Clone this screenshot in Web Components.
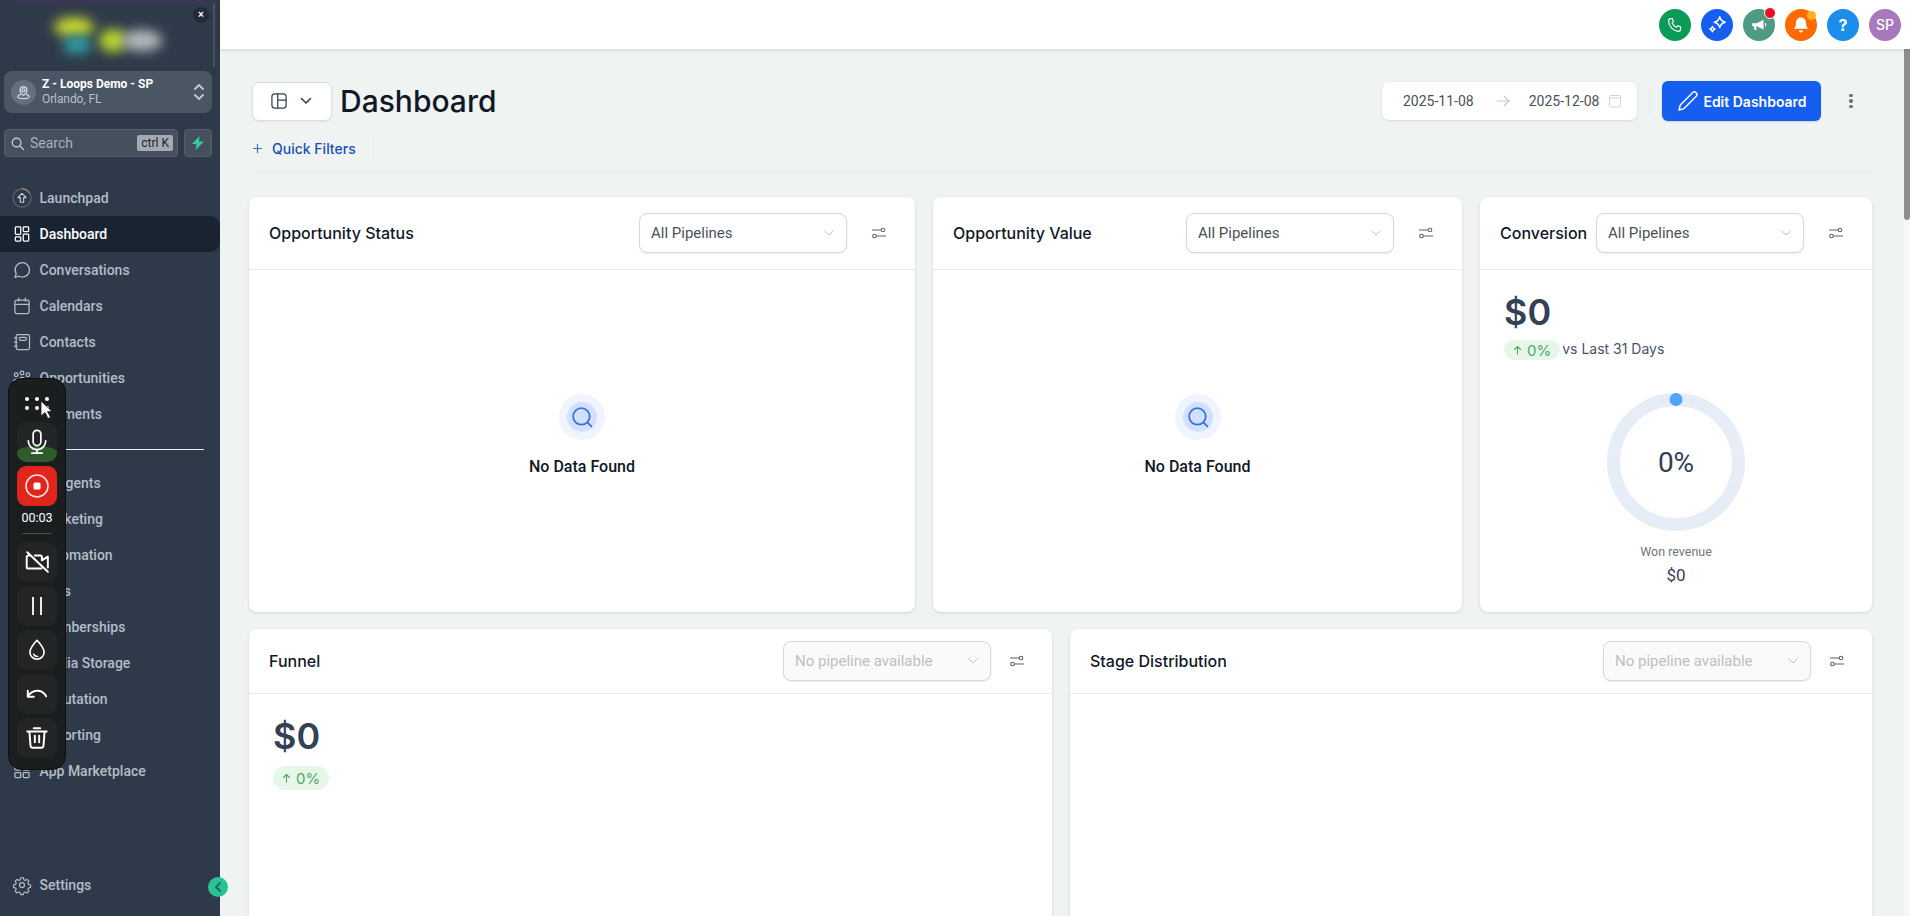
<!DOCTYPE html>
<html lang="en"><head><meta charset="utf-8"><title>Dashboard</title>
<style>
html,body{margin:0;height:100%;overflow:hidden;background:#eff4f3;font-family:Inter,"Liberation Sans",sans-serif}
</style></head><body>
<app-shell></app-shell>
<script>
const S='fill="none" stroke="currentColor" stroke-width="1.5" stroke-linecap="round" stroke-linejoin="round"';
const ic=(d,size=20,vb=24,sw=1.5)=>`<svg width="${size}" height="${size}" viewBox="0 0 ${vb} ${vb}" ${S.replace('1.5',sw)}>${d}</svg>`;
const ICONS={
 launch:`<svg width="20" height="20" viewBox="0 0 24 24" fill="none" stroke-width="1.3" stroke-linecap="round" stroke-linejoin="round"><circle cx="12" cy="12" r="11" stroke="#5f6b7a"/><path d="M12 1a11 11 0 0 1 9 4.800" stroke="#c98a5a"/><path d="M12 6.500 7 11.500h3V17h4v-5.500h3z" stroke="#cbd2da"/></svg>`,
 dash:ic('<rect x="4" y="3.500" width="6.500" height="9" rx="1"/><rect x="13.500" y="3.500" width="6.500" height="5.500" rx="1"/><rect x="4" y="15.500" width="6.500" height="5" rx="1"/><rect x="13.500" y="12" width="6.500" height="8.500" rx="1"/>'),
 chat:ic('<path d="M3.500 21l1.600-4.500A8.600 8.600 0 1 1 8 19.300z"/>'),
 cal:ic('<rect x="3.500" y="5" width="17" height="16" rx="2"/><path d="M3.500 10h17M8 2.500V6M16 2.500V6"/>'),
 contacts:ic('<rect x="5" y="3" width="16" height="18" rx="2"/><rect x="9" y="6.500" width="8" height="3.500" rx="1"/><path d="M3 7h3M3 12h3M3 17h3"/>'),
 opp:ic('<circle cx="5" cy="8" r="2.200"/><circle cx="12" cy="6" r="2.200"/><circle cx="19" cy="8" r="2.200"/><path d="M2 16c0-3 6-3 6 0M9 14c0-3.500 6-3.500 6 0M16 16c0-3 6-3 6 0"/>'),
 pay:ic('<rect x="3" y="5" width="18" height="14" rx="2"/><path d="M3 10h18"/>'),
 bot:ic('<rect x="4" y="7" width="16" height="13" rx="3"/><path d="M12 3v4"/>'),
 mkt:ic('<path d="M4 10v4l12 5V5z"/>'),
 auto:ic('<circle cx="12" cy="12" r="8"/>'),
 sites:ic('<circle cx="12" cy="12" r="9"/><path d="M3 12h18"/>'),
 mem:ic('<circle cx="12" cy="8" r="4"/><path d="M5 20c1-6 13-6 14 0"/>'),
 media:ic('<rect x="3" y="5" width="18" height="14" rx="2"/>'),
 rep:ic('<path d="M12 4l2.500 5 5.500.8-4 3.900 1 5.500-5-2.600-5 2.600 1-5.500-4-3.900 5.500-.8z"/>'),
 rpt:ic('<path d="M5 20V10M12 20V4M19 20v-7"/>'),
 apps:ic('<rect x="3.500" y="4" width="7" height="7" rx="1"/><rect x="13.500" y="4" width="7" height="7" rx="1"/><rect x="3.500" y="14" width="7" height="6" rx="1"/><rect x="13.500" y="14" width="7" height="6" rx="1"/>'),
 gear:ic('<circle cx="12" cy="12" r="3"/><path d="M10.300 2.500h3.400l.7 2.700 1.800.8 2.400-1.400 2.400 2.400-1.400 2.400.8 1.800 2.700.7v3.200l-2.700.7-.8 1.800 1.400 2.400-2.400 2.400-2.400-1.400-1.800.8-.7 2.700h-3.400l-.7-2.700-1.800-.8-2.400 1.400-2.400-2.400 1.400-2.400-.8-1.800-2.700-.7v-3.200l2.700-.7.8-1.800-1.400-2.400 2.400-2.400 2.400 1.400 1.800-.8z" transform="translate(1 1) scale(.92)"/>',22)
};
function def(name,css,html){
 customElements.define(name,class extends HTMLElement{
  connectedCallback(){ if(this.shadowRoot)return;
   const r=this.attachShadow({mode:'open'});
   const h=typeof html==='function'?html(this):html;
   r.innerHTML=`<style>${css}</style>${h}`;
  }
 });
}
def('nav-item',`:host{display:block;height:36px;color:#b4bcc6;font:500 14px/36px Roboto,sans-serif}
 .r{display:flex;align-items:center;height:36px;padding-left:12px;gap:7.500px;box-sizing:border-box;border-radius:0 10px 10px 0}
 .i{width:20px;height:20px;display:flex;align-items:center;justify-content:center;flex:none}
 :host([active]) .r{background:#1a2332;color:#fff}
 :host([active]){color:#fff}`,
 h=>`<div class="r"><span class="i">${ICONS[h.getAttribute('icon')]}</span><span>${h.getAttribute('label')}</span></div>`);

def('side-bar',`:host{display:flex;flex-direction:column;width:220px;flex:none;height:916px;background:#2e3a49;position:relative;font-family:Roboto,sans-serif;color:#fff}
 .logo{height:71px;position:relative;overflow:hidden;flex:none}
 .logo .band{position:absolute;left:16px;right:4px;top:0;height:67px;background:linear-gradient(#3a3553 0,#2f3b4a 8px)}
 .logo .edge{position:absolute;right:5px;top:3px;width:2px;height:64px;background:#46525f}
 .blob{position:absolute;border-radius:50%;filter:blur(6px)}
 .x{position:absolute;left:193px;top:7px;width:16px;height:16px;border-radius:50%;background:#202c38;color:#fff;font:700 10px/16px "Liberation Sans",sans-serif;text-align:center}
 .loc{margin:0 8px 0 4px;height:42px;flex:none;border-radius:8px;background:#4a5664;display:flex;align-items:center;padding:0 7px;box-sizing:border-box;gap:6px}
 .pin{width:25px;height:25px;border-radius:50%;background:#647080;display:flex;align-items:center;justify-content:center;color:#dfe3e8}
 .lt{flex:1;font:700 12px/15px Roboto,sans-serif;color:#fff}.lt small{display:block;font:400 12px/15px Roboto,sans-serif;color:#b9c0c9;letter-spacing:-.1px}
 .sr{display:flex;gap:6px;margin:16px 8px 0 4px;height:28px;flex:none}
 .search{flex:1;background:#454f5d;border:1px solid #56606d;border-radius:4px;display:flex;align-items:center;padding:0 4px 0 5px;gap:5px;color:#a9b1bb;font-size:14px;box-sizing:border-box}
 .search span{flex:1}.search kbd{background:#a4aab1;color:#1c2430;font:400 12px/16px Roboto,sans-serif;border-radius:2px;padding:0 4px}
 .bolt{width:28px;background:#454f5d;border:1px solid #56606d;border-radius:4px;box-sizing:border-box;display:flex;align-items:center;justify-content:center}
 nav{margin-top:23px;flex:none}
 hr{border:0;height:1px;background:#e8ecef;margin:17px 16px 15px 16px}
 .sp{flex:1}
 .tog{position:absolute;left:208px;top:877px;width:20px;height:20px;border-radius:50%;background:#29c295;display:flex;align-items:center;justify-content:center;color:#1f6a55;z-index:3}
 .set{margin-bottom:13px}`,
 `<div class="logo"><div class="band"></div><div class="edge"></div>
 <div class="blob" style="left:54px;top:17px;width:40px;height:20px;background:#c8d62f"></div>
 <div class="blob" style="left:63px;top:36px;width:28px;height:18px;background:#2d9fa8"></div>
 <div class="blob" style="left:99px;top:29px;width:28px;height:23px;background:#b8d632"></div>
 <div class="blob" style="left:122px;top:30px;width:40px;height:21px;background:#b4babd"></div>
 <div class="x">×</div></div>
 <div class="loc"><span class="pin"><svg width="15" height="15" viewBox="0 0 24 24" fill="none" stroke="currentColor" stroke-width="1.800" stroke-linecap="round" stroke-linejoin="round"><circle cx="12" cy="8.500" r="2.500"/><path d="M12 17c-3-2.500-5.500-5-5.500-8.500a5.500 5.500 0 0 1 11 0C17.500 12 15 14.500 12 17z"/><path d="M7 15c-2.500.8-4 2-4 3.500C3 20.500 7 22 12 22s9-1.500 9-3.500c0-1.500-1.500-2.700-4-3.500"/></svg></span>
 <div class="lt">Z - Loops Demo - SP<small>Orlando, FL</small></div>
 <svg width="12" height="22" viewBox="0 0 12 22" fill="none" stroke="#c4cad1" stroke-width="1.800" stroke-linecap="round" stroke-linejoin="round"><path d="M2 8l4-4 4 4M2 14l4 4 4-4"/></svg></div>
 <div class="sr"><div class="search"><svg width="15" height="15" viewBox="0 0 24 24" fill="none" stroke="#c0c6ce" stroke-width="2.200" stroke-linecap="round"><circle cx="10.500" cy="10.500" r="7"/><path d="M16 16l5.500 5.500"/></svg><span>Search</span><kbd>ctrl K</kbd></div>
 <div class="bolt"><svg width="12" height="14" viewBox="0 0 12 14"><path d="M7.500 0 0 8h4.500L3.500 14 12 5.500H7z" fill="#36c99a"/></svg></div></div>
 <nav>
 <nav-item icon="launch" label="Launchpad"></nav-item><nav-item icon="dash" label="Dashboard" active></nav-item>
 <nav-item icon="chat" label="Conversations"></nav-item><nav-item icon="cal" label="Calendars"></nav-item>
 <nav-item icon="contacts" label="Contacts"></nav-item><nav-item icon="opp" label="Opportunities"></nav-item>
 <nav-item icon="pay" label="Payments"></nav-item><hr>
 <nav-item icon="bot" label="AI Agents"></nav-item><nav-item icon="mkt" label="Marketing"></nav-item>
 <nav-item icon="auto" label="Automation"></nav-item><nav-item icon="sites" label="Sites"></nav-item>
 <nav-item icon="mem" label="Memberships"></nav-item><nav-item icon="media" label="Media Storage"></nav-item>
 <nav-item icon="rep" label="Reputation"></nav-item><nav-item icon="rpt" label="Reporting"></nav-item>
 <nav-item icon="apps" label="App Marketplace"></nav-item></nav>
 <div class="sp"></div><nav-item class="set" icon="gear" label="Settings"></nav-item>
 <div class="tog"><svg width="10" height="12" viewBox="0 0 10 12" fill="none" stroke="currentColor" stroke-width="1.800" stroke-linecap="round" stroke-linejoin="round"><path d="M7 2 3 6l4 4"/></svg></div>`);

def('rec-toolbar',`:host{position:absolute;left:8px;top:378px;width:58px;height:392px;box-sizing:border-box;background:#1b1e1f;border:1px solid #0b0d0e;border-radius:14px;z-index:5;display:flex;flex-direction:column;align-items:center;padding-top:18px;color:#fff}
 .grip{display:grid;grid-template-columns:repeat(3,4px);gap:5px 6px;height:13px;margin-bottom:12px}.grip i{width:4px;height:4px;border-radius:50%;background:#fff}
 .b{width:40px;height:40px;border-radius:9px;background:#222425;display:flex;align-items:center;justify-content:center;margin-bottom:4px;position:relative;overflow:hidden;flex:none}
 .b svg{position:relative}
 .mic::before{content:"";position:absolute;left:0;right:0;bottom:0;height:16px;background:#2f5c2d;border-radius:50% 50% 9px 9px/40% 40% 9px 9px}
 .rec{background:#e0261c;margin-bottom:4px}
 .t{font:400 12.500px/16px Roboto,sans-serif;margin-bottom:7px}
 .d{width:30px;height:1px;background:#4a4d4f;margin-bottom:8px}
 .cur{position:absolute;left:31px;top:21px}`,
 `<div class="grip"><i></i><i></i><i></i><i></i><i></i><i></i></div>
 <svg class="cur" width="13" height="20" viewBox="0 0 13 20"><path d="M1 1v15l4-3.500 3 6 2.500-1.200-3-5.800H12z" fill="#fff" stroke="#222" stroke-width=".8"/></svg>
 <div class="b mic">${ic('<rect x="8.700" y="2" width="6.600" height="13" rx="3.300"/><path d="M4.500 11a7.500 7.500 0 0 0 15 0M12 18.500v3M7.500 21.500h9"/>',28)}</div>
 <div class="b rec"><svg width="26" height="26" viewBox="0 0 26 26"><circle cx="13" cy="13" r="11" fill="none" stroke="#fbe3e1" stroke-width="1.600"/><rect x="9.500" y="9.500" width="7" height="7" rx="1.500" fill="#fff"/></svg></div>
 <div class="t">00:03</div><div class="d"></div>
 <div class="b">${ic('<path d="M3 3l19 18M6 6H4a1.500 1.500 0 0 0-1.500 1.500v9A1.500 1.500 0 0 0 4 18h12M10 6h5a1.500 1.500 0 0 1 1.500 1.500v3L22 7v10"/>',26,24,1.8)}</div>
 <div class="b"><svg width="26" height="26" viewBox="0 0 26 26" stroke="#fff" stroke-width="1.800"><path d="M9 4v18M17 4v18"/></svg></div>
 <div class="b">${ic('<path d="M12 3c3 3.500 6.500 6.800 6.500 11a6.500 6.500 0 0 1-13 0C5.500 9.800 9 6.500 12 3z"/><path d="M9 16c.7 1.300 2 2 3.500 2"/>',26)}</div>
 <div class="b">${ic('<path d="M3.500 9v5.500H9"/><path d="M3.500 14C6 10.500 9 9 12.500 9c3.500 0 6 1.800 8 5"/>',26,24,1.8)}</div>
 <div class="b">${ic('<path d="M3 6h18M9 3h6M5 6l1 13a2 2 0 0 0 2 2h8a2 2 0 0 0 2-2l1-13M10 10v6M14 10v6"/>',26,24,1.8)}</div>`);

def('top-bar',`:host{display:flex;justify-content:flex-end;align-items:center;gap:10px;height:49px;flex:none;background:#fff;padding-right:9px;box-sizing:border-box;box-shadow:0 1px 4px rgba(16,24,40,.14);position:relative;z-index:2}
 .c{width:32px;height:32px;border-radius:50%;display:flex;align-items:center;justify-content:center;color:#fff;position:relative;font:500 14px Inter,sans-serif}
 .n{position:absolute;top:-1px;right:-1px;width:9px;height:9px;border-radius:50%;border:1px solid #fff}`,
 `<div class="c" style="background:#0b9a58">${ic('<path d="M6 3.500h2.500l1.500 4-2 1.500a11 11 0 0 0 6 6l1.500-2 4 1.500V17c0 2-1.500 3.500-3 3.500C10 20.500 3.500 13.500 3.500 7 3.500 5 5 3.500 6 3.500z"/>',18)}</div>
 <div class="c" style="background:#155eef">${ic('<path d="M15 3c.8 3.800 2.200 5.200 6 6-3.800.8-5.200 2.200-6 6-.8-3.800-2.200-5.200-6-6 3.800-.8 5.200-2.200 6-6zM7 13.500c.4 2 1 2.600 3 3-2 .4-2.600 1-3 3-.4-2-1-2.600-3-3 2-.4 2.600-1 3-3z"/>',22)}</div>
 <div class="c" style="background:#4e9a82"><svg width="18" height="18" viewBox="0 0 24 24" fill="#fff"><path d="M3 9.500h6L18 5v13l-9-4.500H8l1 5H6l-1-5H3zM20 8.500a3.500 3.500 0 0 1 0 6z"/></svg><span class="n" style="background:#e9111f;width:10px;height:10px;top:-2px;right:-1px"></span></div>
 <div class="c" style="background:#ff6a00"><svg width="20" height="20" viewBox="0 0 24 24" fill="#fff"><path d="M12 3a6 6 0 0 0-6 6c0 4-1 6-2.500 7.500h17C19 15 18 13 18 9a6 6 0 0 0-6-6zM9.500 18.500h5a2.500 2.500 0 0 1-5 0z"/></svg><span class="n" style="background:#fdb022;border:0;top:2px;right:1px"></span></div>
 <div class="c" style="background:#1b8eea;font:700 16px Inter,sans-serif">?</div>
 <div class="c" style="background:#a678be">SP</div>`);

def('dash-header',`:host{display:block;color:#101828}
 .a{display:flex;align-items:center;height:40px;padding-left:3px}
 .tg{width:80px;height:39px;box-sizing:border-box;background:#fff;border:1px solid #d9dde3;border-radius:7px;display:flex;align-items:center;justify-content:center;gap:11px;margin-right:8px;color:#344054;box-shadow:0 1px 2px rgba(16,24,40,.05)}
 .tg svg:first-child{margin-left:-3px}
 h1{margin:0;font:500 30px/40px Inter,sans-serif;color:#101828}
 .sp{flex:1}
 .dp{width:255px;height:38px;background:#fff;border-radius:7px;box-shadow:0 1px 3px rgba(16,24,40,.12);display:flex;align-items:center;font:400 14px Roboto,sans-serif;color:#4a5058;box-sizing:border-box;padding-left:21px}
 .dp .ar{margin:0 19px 0 22px;color:#c4c7cb;display:flex}.dp .cal{margin-left:9px;color:#d0d3d7;display:flex}
 .sep{width:1px;height:26px;background:#e6eaea;margin:0 12px}
 .ed{width:159px;height:40px;background:#155eef;color:#fff;border-radius:6px;display:flex;align-items:center;justify-content:center;gap:3px;font:600 14px Inter,sans-serif;box-sizing:border-box;box-shadow:0 1px 2px rgba(16,24,40,.15)}
 .dots{width:4px;margin:0 19px 0 28px;display:flex;flex-direction:column;gap:2px}.dots i{width:3.500px;height:3.500px;border-radius:50%;background:#6b7178}
 .q{display:flex;align-items:center;height:25px;margin-top:15px;padding-left:3px;color:#1d50b2;font:500 14px Inter,sans-serif;gap:9px}
 .q svg{flex:none}.q i{width:1px;height:25px;background:#eaeeee;margin-left:3px}
 .ln{height:1px;background:#e6ebeb;margin-top:10px}`,
 `<div class="a"><div class="tg">${ic('<rect x="3.500" y="3.500" width="17" height="17" rx="3.500"/><path d="M10.500 3.500v17M10.500 11h10"/>',20)}<svg width="12" height="8" viewBox="0 0 12 8" fill="none" stroke="#344054" stroke-width="1.600" stroke-linecap="round" stroke-linejoin="round"><path d="M1.500 1.500 6 6l4.500-4.500"/></svg></div><h1>Dashboard</h1><div class="sp"></div>
 <div class="dp"><span>2025-11-08</span><span class="ar"><svg width="14" height="14" viewBox="0 0 14 14" fill="none" stroke="currentColor" stroke-width="1.100"><path d="M1 7h12M8 2l5 5-5 5"/></svg></span><span>2025-12-08</span><span class="cal"><svg width="14" height="14" viewBox="0 0 14 14" fill="none" stroke="currentColor" stroke-width="1"><rect x="1.500" y="1.500" width="11" height="11.500" rx="1"/><path d="M1.500 4h11"/></svg></span></div>
 <div class="sep"></div>
 <div class="ed"><svg width="24" height="24" viewBox="0 0 24 24" fill="none" stroke="#fff" stroke-width="1.400" stroke-linejoin="round"><path d="M3 21l1.300-5L16.500 3.800a2.500 2.500 0 0 1 3.700 3.500L8 19.600z"/></svg>Edit Dashboard</div>
 <div class="dots"><i></i><i></i><i></i></div></div>
 <div class="q"><svg width="11" height="11" viewBox="0 0 11 11" stroke="#3b6fd0" stroke-width="1.200"><path d="M5.500 1v9M1 5.500h9"/></svg><span>Quick Filters</span><i></i></div>
 <div class="ln"></div>`);

def('pipe-select',`:host{display:flex;align-items:center;width:208px;height:40px;box-sizing:border-box;border:1px solid #d5d8dc;border-radius:8px;background:#fff;padding:0 11px;font:400 15px Roboto,sans-serif;color:#4a5058;box-shadow:0 1px 2px rgba(16,24,40,.08)}
 :host([off]){background:#f9fafa;color:#bcc0c4}
 span{flex:1}`,h=>`<span>${h.getAttribute('text')}</span><svg width="12" height="8" viewBox="0 0 12 8" fill="none" stroke="#bfc3c8" stroke-width="1"><path d="M1.500 1.500 6 6l4.500-4.500"/></svg>`);

def('dash-card',`:host{display:flex;flex-direction:column;background:#fff;border-radius:8px;box-shadow:0 1px 3px rgba(16,24,40,.14);min-width:0}
 .h{height:73px;flex:none;display:flex;align-items:center;padding:0 20px;border-bottom:1px solid #e9ecee;box-sizing:border-box;font:500 16px Inter,sans-serif;color:#101828;white-space:nowrap}
 :host([compact]) .h{height:65px}
 .t{flex:1}
 .f{width:16px;height:16px;margin:0 8px 0 24px;color:#5c6570;display:flex;flex:none}
 :host([compact]) .f{margin:0 7px 0 18px}
 .b{flex:1;min-height:0}`,
 h=>`<div class="h"><span class="t">${h.getAttribute('title')}</span><pipe-select text="${h.getAttribute('select')}" ${h.hasAttribute('off')?'off':''}></pipe-select><span class="f"><svg width="16" height="16" viewBox="0 0 16 16" fill="none" stroke="currentColor" stroke-width="1.100"><path d="M1 5h9M14 5h0M5 11h10M1 11h0"/><circle cx="12" cy="5" r="1.800"/><circle cx="3.500" cy="11" r="1.800"/></svg></span></div><div class="b"><slot></slot></div>`);

def('empty-state',`:host{display:flex;flex-direction:column;align-items:center;height:100%;box-sizing:border-box;padding-top:124px;font:500 16px/20px Roboto,sans-serif;color:#101828}
 .o{width:46px;height:46px;border-radius:50%;background:#eff4ff;display:flex;align-items:center;justify-content:center;margin-bottom:17px}
 .i{width:30px;height:30px;border-radius:50%;background:#d1e0ff;display:flex;align-items:center;justify-content:center}`,
 `<div class="o"><div class="i"><svg width="26" height="26" viewBox="0 0 22 22" fill="none" stroke="#3b72d9" stroke-width="1.500" stroke-linecap="round"><circle cx="10.500" cy="10.500" r="7"/><path d="M16 16l3 3"/></svg></div></div>No Data Found`);

def('stat-block',`:host{display:block;padding:20px 20px 0 24px;font-family:Inter,sans-serif}
 :host([compact]) .b{height:24px}
 :host([compact]) .r{margin-top:8px}
 .v{font:600 36px/44px Inter,sans-serif;color:#344054}
 .r{display:flex;align-items:center;gap:2px;margin-top:5px;font:400 14px/20px Inter,sans-serif;color:#475467}
 .b{display:inline-flex;align-items:center;height:20px;background:#e6f7ea;border-radius:12px;padding:0 9px;color:#4da768;font:400 15px Inter,sans-serif;gap:5px}
 .n{margin-bottom:2px}`,
 h=>`<div class="v">$0</div><div class="r"><span class="b"><svg width="9" height="10" viewBox="0 0 9 10" fill="none" stroke="#4da768" stroke-width="1.100" stroke-linecap="round" stroke-linejoin="round"><path d="M4.500 9V1.500M1.500 4.500l3-3 3 3"/></svg>0%</span>${h.getAttribute('note')?`<span class="n">${h.getAttribute('note')}</span>`:''}</div>`);

def('donut-chart',`:host{display:flex;flex-direction:column;align-items:center;margin-top:32px;font-family:Roboto,sans-serif;color:#344054}
 .w{position:relative;width:138px;height:138px}
 .p{position:absolute;inset:0;display:flex;align-items:center;justify-content:center;font:400 28px Roboto,sans-serif}
 .l{margin-top:13px;font:400 12.500px/16px Roboto,sans-serif;color:#707680}
 .m{margin-top:4px;font:400 17px/22px Roboto,sans-serif;color:#344054}`,
 `<div class="w"><svg width="138" height="138" viewBox="0 0 138 138"><circle cx="69" cy="69" r="62.500" fill="none" stroke="#e6edf6" stroke-width="13"/><circle cx="69" cy="6.500" r="6.500" fill="#4da6fb"/></svg><div class="p">0%</div></div><div class="l">Won revenue</div><div class="m">$0</div>`);

def('page-scroll',`:host{display:block;width:6px;flex:none;background:#f6f8f8;height:100%}
 i{display:block;height:171px;background:#8c8f92;border-radius:0 0 4px 4px}`,`<i></i>`);

def('dash-page',`:host{display:flex;flex-direction:column;flex:1;min-width:0;padding:32px 32px 0 29px;box-sizing:border-box;overflow:hidden;height:100%}
 .g1{display:grid;grid-template-columns:666px 529px 392px;gap:18px;margin-top:25px;height:415px;flex:none}
 .g2{display:grid;grid-template-columns:803px 802px;gap:18px;margin-top:17px;height:500px;flex:none}`,
 `<dash-header></dash-header>
 <div class="g1">
 <dash-card title="Opportunity Status" select="All Pipelines"><empty-state></empty-state></dash-card>
 <dash-card title="Opportunity Value" select="All Pipelines"><empty-state></empty-state></dash-card>
 <dash-card title="Conversion" select="All Pipelines"><stat-block note="vs Last 31 Days"></stat-block><donut-chart></donut-chart></dash-card></div>
 <div class="g2"><dash-card compact title="Funnel" select="No pipeline available" off><stat-block compact></stat-block></dash-card>
 <dash-card compact title="Stage Distribution" select="No pipeline available" off></dash-card></div>`);

def('app-shell',`:host{display:flex;width:1910px;height:916px;position:relative;overflow:hidden;background:#eff4f3}
 .m{flex:1;min-width:0;display:flex;flex-direction:column;height:916px}
 .c{flex:1;min-height:0;display:flex}`,
 `<side-bar></side-bar><rec-toolbar></rec-toolbar><div class="m"><top-bar></top-bar><div class="c"><dash-page></dash-page><page-scroll></page-scroll></div></div>`);
</script>
</body></html>
